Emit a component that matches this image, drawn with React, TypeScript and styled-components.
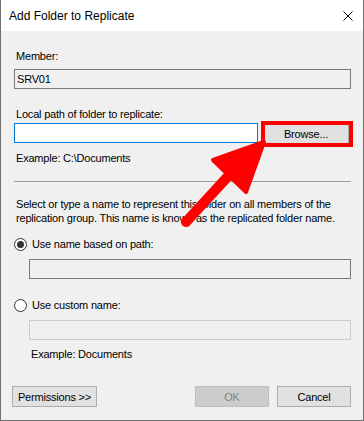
import React from "react";
import styled, { createGlobalStyle } from "styled-components";

const GlobalStyle = createGlobalStyle`
  html, body {
    margin: 0;
    padding: 0;
    background: #ffffff;
  }
`;

const Window = styled.div`
  position: relative;
  width: 364px;
  height: 421px;
  box-sizing: border-box;
  border: 1px solid #707070;
  border-top: none;
  background: #f0f0f0;
  display: flex;
  flex-direction: column;
  font-family: "Liberation Sans", Arial, sans-serif;
  font-size: 11px;
  letter-spacing: -0.2px;
  color: #000;
`;

const TitleBar = styled.div`
  height: 31px;
  flex-shrink: 0;
  background: #fff;
  display: flex;
  align-items: center;
  justify-content: space-between;
  padding: 0 10px 0 8px;
  font-size: 12px;
  letter-spacing: 0;
`;

const Body = styled.div`
  display: flex;
  flex-direction: column;
  padding: 0 12px 0 13px;
`;

const Label = styled.div<{ $top: number; $indent?: number }>`
  line-height: 13px;
  margin-top: ${(p) => p.$top}px;
  padding-left: ${(p) => 2 + (p.$indent || 0)}px;
  white-space: nowrap;
`;

type FieldKind = "readonly" | "focus" | "disabled";

const fieldBorder: Record<FieldKind, string> = {
  readonly: "#7a7a7a",
  focus: "#0078d7",
  disabled: "#cccccc",
};

const Field = styled.div<{ $kind: FieldKind; $top?: number; $indent?: number }>`
  height: 20px;
  flex-shrink: 0;
  box-sizing: border-box;
  border: 1px solid ${(p) => fieldBorder[p.$kind]};
  background: ${(p) => (p.$kind === "focus" ? "#ffffff" : "#f0f0f0")};
  margin-top: ${(p) => p.$top || 0}px;
  margin-left: ${(p) => p.$indent || 0}px;
  padding-left: 2px;
  line-height: 18px;
`;

const PathRow = styled.div`
  display: flex;
  align-items: flex-start;
  gap: 5px;
  margin-top: 2px;
  padding-right: 2px;

  & > ${Field} {
    flex: 1;
  }
`;

const Highlight = styled.div`
  position: relative;

  &::after {
    content: "";
    position: absolute;
    top: -2px;
    left: -2px;
    right: -4px;
    bottom: -3px;
    border: 4px solid #ff0000;
    pointer-events: none;
  }
`;

const Button = styled.button<{ $width: number }>`
  width: ${(p) => p.$width}px;
  height: 21px;
  box-sizing: border-box;
  border: 1px solid #adadad;
  background: #e1e1e1;
  font-family: inherit;
  font-size: 11px;
  letter-spacing: -0.2px;
  color: #000;
  padding: 0;
  display: block;

  &:disabled {
    border-color: #bfbfbf;
    background: #cccccc;
    color: #838383;
  }
`;

const Separator = styled.div`
  height: 1px;
  background: #a0a0a0;
  margin-top: 16px;
`;

const Paragraph = styled.div`
  line-height: 14px;
  margin-top: 15px;
  padding-left: 2px;
  white-space: nowrap;
`;

const RadioRow = styled.div<{ $top: number }>`
  display: flex;
  align-items: center;
  gap: 5px;
  height: 13px;
  line-height: 13px;
  margin-top: ${(p) => p.$top}px;
`;

const Radio = styled.span<{ $checked?: boolean }>`
  position: relative;
  width: 13px;
  height: 13px;
  box-sizing: border-box;
  border: 1px solid #333;
  border-radius: 50%;
  background: #fff;

  &::after {
    content: "";
    display: ${(p) => (p.$checked ? "block" : "none")};
    position: absolute;
    top: 2px;
    left: 2px;
    width: 7px;
    height: 7px;
    border-radius: 50%;
    background: #333;
  }
`;

const Footer = styled.div`
  display: flex;
  justify-content: space-between;
  margin: 25px 0 0 -2px;
`;

const ButtonGroup = styled.div`
  display: flex;
  gap: 8px;
`;

const Arrow = styled.svg`
  position: absolute;
  top: 0;
  left: -1px;
  pointer-events: none;
`;

const CloseIcon = () => (
  <svg width="10" height="10" viewBox="0 0 10 10">
    <path d="M0.5 0.5 L9.5 9.5 M9.5 0.5 L0.5 9.5" stroke="#000" strokeWidth="1" />
  </svg>
);

export default function App() {
  return (
    <>
      <GlobalStyle />
      <Window>
        <TitleBar>
          <span>Add Folder to Replicate</span>
          <CloseIcon />
        </TitleBar>
        <Body>
          <Label $top={19}>Member:</Label>
          <Field $kind="readonly" $top={6}>SRV01</Field>
          <Label $top={19}>Local path of folder to replicate:</Label>
          <PathRow>
            <Field $kind="focus" />
            <Highlight>
              <Button $width={86}>Browse...</Button>
            </Highlight>
          </PathRow>
          <Label $top={8}>Example: C:\Documents</Label>
          <Separator />
          <Paragraph>
            Select or type a name to represent this folder on all members of the
            <br />
            replication group. This name is known as the replicated folder name.
          </Paragraph>
          <RadioRow $top={13}>
            <Radio $checked />
            <span>Use name based on path:</span>
          </RadioRow>
          <Field $kind="readonly" $top={8} $indent={15} />
          <RadioRow $top={20}>
            <Radio />
            <span>Use custom name:</span>
          </RadioRow>
          <Field $kind="disabled" $top={8} $indent={15} />
          <Label $top={8} $indent={15}>Example: Documents</Label>
          <Footer>
            <Button $width={85}>Permissions &gt;&gt;</Button>
            <ButtonGroup>
              <Button $width={74} disabled>OK</Button>
              <Button $width={74}>Cancel</Button>
            </ButtonGroup>
          </Footer>
        </Body>
        <Arrow width="364" height="421" viewBox="0 0 364 421">
          <line x1="186" y1="222" x2="232" y2="172" stroke="#ff0000" strokeWidth="10" strokeLinecap="round" />
          <polygon
            points="264,142 213,160 246,192"
            fill="#ff0000"
            stroke="#ff0000"
            strokeWidth="4"
            strokeLinejoin="round"
          />
        </Arrow>
      </Window>
    </>
  );
}
